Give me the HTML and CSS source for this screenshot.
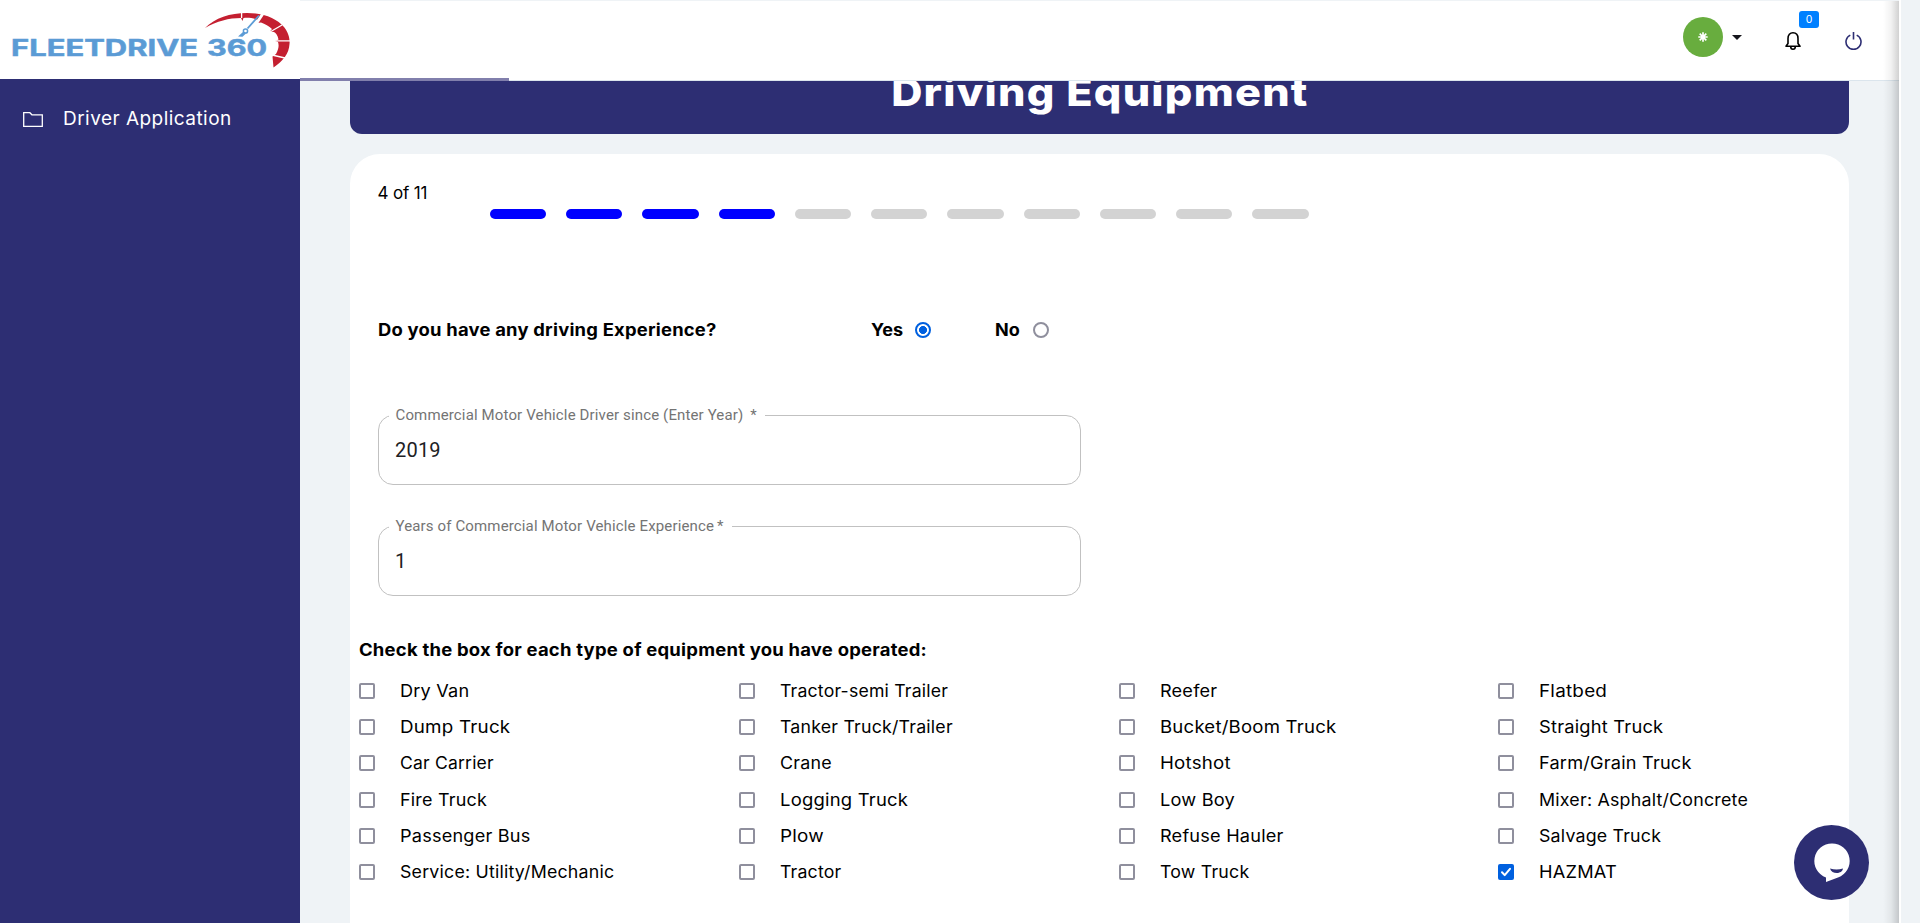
FILE: index.html
```html
<!DOCTYPE html>
<html lang="en">
<head>
<meta charset="utf-8">
<title>Driving Equipment</title>
<link rel="stylesheet" href="styles.css">
</head>
<body>
<div class="app">
  <aside class="sidebar">
    <div class="brand">
      <svg width="300" height="79" viewBox="0 0 300 79">
        <g class="wordmark">
          <text x="11" y="56" textLength="187" lengthAdjust="spacingAndGlyphs">FLEETDRIVE</text>
          <text x="207" y="56" textLength="60" lengthAdjust="spacingAndGlyphs">360</text>
        </g>
        <path fill="#c41f30" d="M205 28C215 18 230 13 247 13C264 13 277 19 284 27C289 33 290 40 289.500 44C289 54 283 61 273.500 67.500L272.500 56.500L276 54C279 48 279 45 278 42L275.500 41L278.500 39.500C277.500 35 276 33 274 32L270 31.500L272 29C269 26 265 24 261 22.500L257 23L258 20C253 18 248 17.500 243.500 18L242.500 21L241 18C229 18 217 21 205 28Z"/>
        <g stroke="#fff" stroke-width="1.300"><path d="M241.600 12v6M270 32l12-7M276 40.800h15M272 55l13 3"/><path stroke-width="3" d="M256 24l8-12"/></g>
        <g fill="none" stroke="#5b9bd5"><path stroke-width="1.800" d="M247.500 28.500L259 15.500"/><circle cx="245.500" cy="31" r="2.100" stroke-width="1.500"/></g>
        <path fill="#5b9bd5" d="M238 36.500L243.500 31.500L246 33.500L242.500 36.800Z"/>
      </svg>
    </div>
    <nav class="menu">
      <a class="menu-item">
        <svg width="20" height="15" viewBox="0 0 20 15"><path fill="none" stroke="#fff" stroke-width="1.300" d="M.7.700h6.200l2 2.100h10.400v11.500H.7z"/></svg>
        <span>Driver Application</span>
      </a>
    </nav>
  </aside>

  <div class="page">
    <header class="topbar">
      <div class="avatar"><svg width="10" height="10" viewBox="0 0 10 10"><path stroke="#fff" stroke-width="1.700" d="M5 .3v9.400M.3 5h9.400M1.700 1.700l6.600 6.600M8.300 1.700L1.700 8.300"/></svg></div>
      <svg class="caret" width="10" height="5" viewBox="0 0 10 5"><path fill="#16161c" d="M0 0h10L5 5z"/></svg>
      <div class="bell">
        <svg width="16" height="18" viewBox="0 0 16 18"><g fill="none" stroke="#000" stroke-width="1.600"><path d="M1 14.300L3 11.500V6.500C3 3 5 .8 8 .8s5 2.200 5 5.700v5L15 14.300Z" stroke-linejoin="round"/><path d="M5.700 14.500c0 3.600 4.600 3.600 4.600 0"/></g></svg>
        <span class="badge">0</span>
      </div>
      <svg class="power" width="17" height="18" viewBox="0 0 17 18"><path fill="none" stroke="#2d2e73" stroke-width="1.600" d="M8.500 0v7.500M5.300 3.100a7.500 7.500 0 1 0 6.400 0"/></svg>
      <div class="load-progress"></div>
    </header>

    <main class="content">
      <h1 class="banner"><span>Driving Equipment</span></h1>
      <section class="card">
        <div class="step-count">4 of 11</div>
        <div class="steps">
          <i class="done"></i><i class="done"></i><i class="done"></i><i class="done"></i><i></i><i></i><i></i><i></i><i></i><i></i><i></i>
        </div>
        <div class="question">
          <span class="prompt">Do you have any driving Experience?</span>
          <label class="choice yes"><span>Yes</span> <span class="radio on"></span></label>
          <label class="choice no"><span>No</span> <span class="radio"></span></label>
        </div>
        <div class="field">
          <label>Commercial Motor Vehicle Driver since (Enter Year) <b>*</b></label>
          <span>2019</span>
        </div>
        <div class="field">
          <label>Years of Commercial Motor Vehicle Experience<b>*</b></label>
          <span>1</span>
        </div>
        <h2 class="group-title">Check the box for each type of equipment you have operated:</h2>
        <div class="equipment">
          <label><i></i><span style="--w:1.066">Dry Van</span></label>
          <label><i></i><span style="--w:1.038">Tractor-semi Trailer</span></label>
          <label><i></i><span style="--w:1.065">Reefer</span></label>
          <label><i></i><span style="--w:1.11">Flatbed</span></label>
          <label><i></i><span style="--w:1.105">Dump Truck</span></label>
          <label><i></i><span style="--w:1.044">Tanker Truck/Trailer</span></label>
          <label><i></i><span style="--w:1.092">Bucket/Boom Truck</span></label>
          <label><i></i><span style="--w:1.075">Straight Truck</span></label>
          <label><i></i><span style="--w:1.03">Car Carrier</span></label>
          <label><i></i><span style="--w:1.05">Crane</span></label>
          <label><i></i><span style="--w:1.1">Hotshot</span></label>
          <label><i></i><span style="--w:1.066">Farm/Grain Truck</span></label>
          <label><i></i><span style="--w:1.055">Fire Truck</span></label>
          <label><i></i><span style="--w:1.085">Logging Truck</span></label>
          <label><i></i><span style="--w:1.07">Low Boy</span></label>
          <label><i></i><span style="--w:1.048">Mixer: Asphalt/Concrete</span></label>
          <label><i></i><span style="--w:1.065">Passenger Bus</span></label>
          <label><i></i><span style="--w:1.11">Plow</span></label>
          <label><i></i><span style="--w:1.067">Refuse Hauler</span></label>
          <label><i></i><span style="--w:1.045">Salvage Truck</span></label>
          <label><i></i><span style="--w:1.045">Service: Utility/Mechanic</span></label>
          <label><i></i><span style="--w:1.04">Tractor</span></label>
          <label><i></i><span style="--w:1.045">Tow Truck</span></label>
          <label><i class="checked"><svg width="16" height="16" viewBox="0 0 16 16"><path fill="none" stroke="#fff" stroke-width="2" stroke-linecap="round" stroke-linejoin="round" d="M4 8.300l2.700 2.800L12 4.800"/></svg></i><span style="--w:1.07">HAZMAT</span></label>
        </div>
      </section>
    </main>
    <div class="edge-shade"></div>
  </div>
  <div class="drawer-edge"></div>
</div>
<div class="chat">
  <svg width="75" height="75" viewBox="0 0 75 75"><path fill="#fff" d="M38 18.500a17.500 17.500 0 0 1 6 34L32 57v-4.500A17.500 17.500 0 0 1 38 18.500Z"/><path fill="#2d2e73" d="M36 43.500q6.500 1.800 13 0c-.8 6-11.500 6-13 0Z"/></svg>
</div>
</body>
</html>
```
FILE: styles.css
```css
* { box-sizing: border-box; }
body {
  margin: 0;
  height: 923px;
  overflow: hidden;
  font-family: Inter, "Liberation Sans", sans-serif;
  color: #000;
  background: #eff3f6;
}
.app { display: flex; height: 923px; }

.sidebar { width: 300px; background: #2d2e73; }
.brand { height: 79px; background: #fff; }
.brand svg { display: block; }
.wordmark {
  font: 700 22.500px Inter, sans-serif;
  fill: #5b9bd5;
  stroke: #5b9bd5;
  stroke-width: .5px;
}
.menu { padding: 26px 0 0 23px; }
.menu-item {
  display: flex;
  align-items: center;
  gap: 20px;
  height: 26px;
  color: #fff;
  font-size: 18.500px;
  letter-spacing: .45px;
}
.menu-item svg { margin-top: 2px; }
.menu-item span { transform: scaleX(1.027); transform-origin: left; }

.page {
  position: relative;
  display: flex;
  flex-direction: column;
  width: 1601px;
  border-right: 2px solid #fff;
}
.topbar {
  position: relative;
  z-index: 1;
  display: flex;
  flex: none;
  height: 81px;
  padding-left: 1383px;
  background: #fff;
  border-top: 1px solid #eff3f6;
  border-bottom: 1px solid #dbe5ed;
}
.avatar {
  display: flex;
  align-items: center;
  justify-content: center;
  width: 40px;
  height: 40px;
  margin-top: 16px;
  border-radius: 50%;
  background: #68ad3e;
}
.caret { margin: 34px 0 0 9px; }
.bell { position: relative; margin: 31px 0 0 43px; height: 18px; }
.badge {
  position: absolute;
  left: 14px;
  top: -21px;
  width: 20px;
  height: 17px;
  border-radius: 3px;
  background: #0080ff;
  color: #fff;
  font-size: 10.500px;
  line-height: 17px;
  text-align: center;
}
.power { margin: 31px 0 0 44px; }
.load-progress {
  position: absolute;
  left: 0;
  bottom: -1px;
  width: 209px;
  height: 3px;
  background: #817fac;
}

.content { padding: 0 50px; height: 842px; overflow: hidden; }
.banner {
  height: 90px;
  margin: -37px 0 20px;
  border-radius: 12px;
  background: #2d2e73;
  color: #fff;
  font-size: 38.500px;
  font-weight: 800;
  line-height: 96px;
  letter-spacing: 1.100px;
  text-align: center;
}
.banner span { display: inline-block; transform: scaleX(1.123); }
.card {
  height: 900px;
  padding-top: 28px;
  border-radius: 30px;
  background: #fff;
  font-size: 17px;
  line-height: 22px;
}
.step-count { padding-left: 27.500px; height: 27px; letter-spacing: -.15px; }
.steps { display: flex; gap: 20px; margin-left: 140px; width: 818.500px; }
.steps i { flex: 1; height: 10px; border-radius: 5px; background: #d3d3d3; }
.steps .done { background: #00f; }

.question { display: flex; margin: 100px 0 74px 27.500px; font-weight: 700; }
.prompt {
  width: 493px;
  letter-spacing: .2px;
  transform: scaleX(1.082);
  transform-origin: left;
}
.choice { display: flex; align-items: center; justify-content: space-between; }
.choice span:first-child { transform: scaleX(1.06); transform-origin: left; }
.yes { width: 60.500px; margin-right: 64px; }
.no { width: 54px; }
.radio {
  width: 16px;
  height: 16px;
  border: 2px solid #8f8f9d;
  border-radius: 50%;
}
.radio.on {
  border-color: #0060df;
  background: radial-gradient(circle, #0060df 3.700px, #fff 4.300px);
}

.field {
  position: relative;
  width: 703px;
  height: 70px;
  margin: 0 0 41px 28px;
  padding-left: 16px;
  border: 1px solid #c1c1c1;
  border-radius: 15px;
  color: #202124;
  font: 20px/69px Roboto, sans-serif;
}
.field > span { letter-spacing: .2px; }
.field label {
  position: absolute;
  left: 10px;
  top: -11px;
  padding: 0 8px 0 6.500px;
  background: #fff;
  color: #747474;
  font-size: 15px;
  line-height: 20px;
  letter-spacing: .140px;
  white-space: nowrap;
}
.field b { margin-left: 3px; font-weight: 400; }

.group-title {
  margin: 43px 0 12px 9px;
  font-size: 17px;
  font-weight: 700;
  line-height: 22px;
  letter-spacing: .2px;
  transform: scaleX(1.086);
  transform-origin: left;
}
.equipment {
  display: grid;
  grid-template-columns: repeat(4, 379.750px);
  grid-auto-rows: 36.200px;
  margin-left: 9px;
}
.equipment label { display: flex; align-items: center; letter-spacing: .2px; }
.equipment label span { transform: scaleX(var(--w)); transform-origin: left; }
.equipment i {
  width: 16px;
  height: 16px;
  margin-right: 25px;
  border: 2px solid #8f8f9d;
  border-radius: 2px;
}
.equipment .checked { border: 0; background: #0060df; }
.checked svg { display: block; }

.edge-shade {
  position: absolute;
  z-index: 2;
  top: 1px;
  right: 0;
  bottom: 0;
  width: 16px;
  background: linear-gradient(to right, rgba(0, 0, 0, 0), rgba(0, 0, 0, .05) 50%, rgba(0, 0, 0, .18));
}
.drawer-edge { flex: 1; background: #eff3f6; }

.chat {
  position: fixed;
  z-index: 3;
  left: 1794px;
  top: 825px;
  width: 75px;
  height: 75px;
  border-radius: 50%;
  background: #2d2e73;
}
```
